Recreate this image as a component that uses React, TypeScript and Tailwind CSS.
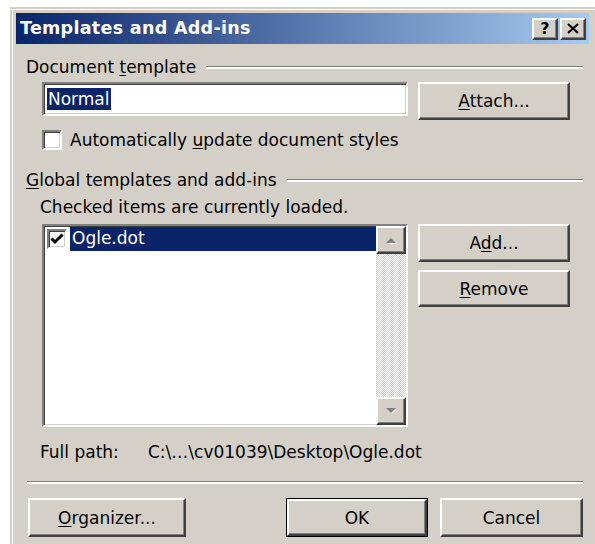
import { ReactNode } from 'react'

const font = { fontFamily: '"DejaVu Sans", Tahoma, sans-serif' }

// classic raised 3D edge used by push buttons
const raised =
  'bg-[#d4d0c8] border-2 border-t-white border-l-white border-r-[#404040] border-b-[#404040] shadow-[inset_-1px_-1px_0_#808080]'

// sunken edge used by edit fields, check boxes and list boxes
const sunken =
  'bg-white border-2 border-t-[#808080] border-l-[#808080] border-r-white border-b-white shadow-[inset_1px_1px_0_#404040,inset_-1px_-1px_0_#d4d0c8]'

function Button({ children, className = '' }: { children: ReactNode; className?: string }) {
  return (
    <div className={`${raised} flex items-center justify-center text-[17px] leading-[20px] text-black ${className}`}>
      {children}
    </div>
  )
}

function Etched({ className = '' }: { className?: string }) {
  return <div className={`h-[3px] border-t border-t-[#808080] border-b-2 border-b-white ${className}`} />
}

function Check({ checked = false }: { checked?: boolean }) {
  return (
    <div className={`${sunken} w-[20px] h-[20px] flex items-center justify-center shrink-0`}>
      {checked && (
        <svg width="14" height="12" viewBox="0 0 14 12">
          <path d="M1.5 5.5 L5 9 L12.5 1.5" stroke="#000" strokeWidth="3" fill="none" />
        </svg>
      )}
    </div>
  )
}

function ScrollArrow({ up }: { up?: boolean }) {
  return (
    <div className={`${raised} w-[30px] h-[28px] flex items-center justify-center`}>
      <svg width="14" height="8" viewBox="0 0 14 8">
        {up ? (
          <>
            <path d="M2 7 L7 2 L12 7 Z" fill="#fff" transform="translate(1,1)" />
            <path d="M2 7 L7 2 L12 7 Z" fill="#808080" />
          </>
        ) : (
          <>
            <path d="M2 1 L12 1 L7 6 Z" fill="#fff" transform="translate(1,1)" />
            <path d="M2 1 L12 1 L7 6 Z" fill="#808080" />
          </>
        )}
      </svg>
    </div>
  )
}

export default function App() {
  return (
    <div className="w-[595px] h-[544px] bg-white overflow-hidden pt-[7px] pl-[10px]" style={font}>
      <div className="w-[590px] h-[560px] bg-[#d4d0c8] border-l-2 border-t-2 border-l-[#d4d0c8] border-t-[#d4d0c8] shadow-[inset_1px_1px_0_#fff] pl-[4px] pt-[4px]">
        {/* caption bar */}
        <div className="w-[573px] h-[31px] bg-[linear-gradient(to_right,#0a246a,#a6caf0)] flex items-center pl-[4px] pr-[3px]">
          <span className="text-white font-bold text-[17.5px] leading-[22px] tracking-[0.3px] -mt-[2px]">Templates and Add-ins</span>
          <div className="ml-auto flex gap-[2px]">
            <div className={`${raised} w-[26px] h-[22px] flex items-center justify-center text-[16px] font-bold leading-none text-black`}>?</div>
            <div className={`${raised} w-[26px] h-[22px] flex items-center justify-center`}>
              <svg width="12" height="11" viewBox="0 0 12 11">
                <path d="M1 1 L11 10 M11 1 L1 10" stroke="#000" strokeWidth="2.2" />
              </svg>
            </div>
          </div>
        </div>

        <div className="pl-[10px] w-[567px] text-[17px] leading-[20px] text-black">
          {/* document template group */}
          <div className="mt-[13px] flex items-center">
            <span>
              Document <span className="underline underline-offset-2">t</span>emplate
            </span>
            <Etched className="flex-1 ml-[10px]" />
          </div>

          <div className="mt-[5px] pl-[16px] flex items-start gap-[10px]">
            <div className={`${sunken} w-[366px] h-[34px] flex items-center pl-[3px]`}>
              <span className="bg-[#0a246a] text-white px-[1px] leading-[22px]">Normal</span>
            </div>
            <Button className="w-[152px] h-[38px]">
              <span>
                <span className="underline underline-offset-2">A</span>ttach...
              </span>
            </Button>
          </div>

          <div className="mt-[10px] pl-[16px] flex items-center gap-[8px] h-[20px]">
            <Check />
            <span>
              Automatically <span className="underline underline-offset-2">u</span>pdate document styles
            </span>
          </div>

          {/* global templates group */}
          <div className="mt-[20px] flex items-center">
            <span>
              <span className="underline underline-offset-2">G</span>lobal templates and add-ins
            </span>
            <Etched className="flex-1 ml-[10px]" />
          </div>

          <div className="mt-[7px] pl-[14px]">Checked items are currently loaded.</div>

          <div className="mt-[7px] pl-[16px] flex items-start gap-[10px]">
            <div className={`${sunken} w-[366px] h-[203px] flex`}>
              <div className="flex-1 pt-[1px] pl-[3px]">
                <div className="flex items-center h-[24px]">
                  <Check checked />
                  <span className="flex-1 ml-[3px] h-[24px] bg-[#0a246a] text-white pl-[2px] leading-[22px]">Ogle.dot</span>
                </div>
              </div>
              <div className="w-[30px] flex flex-col bg-[repeating-conic-gradient(#d4d0c8_0_25%,#ffffff_0_50%)] bg-[length:2px_2px]">
                <ScrollArrow up />
                <div className="flex-1" />
                <ScrollArrow />
              </div>
            </div>
            <div className="flex flex-col gap-[8px]">
              <Button className="w-[152px] h-[38px]">
                <span>
                  A<span className="underline underline-offset-2">d</span>d...
                </span>
              </Button>
              <Button className="w-[152px] h-[37px]">
                <span>
                  <span className="underline underline-offset-2">R</span>emove
                </span>
              </Button>
            </div>
          </div>

          <div className="mt-[15px] pl-[14px] flex">
            <span className="w-[108px]">Full path:</span>
            <span>C:\…\cv01039\Desktop\Ogle.dot</span>
          </div>

          <Etched className="mt-[19px] ml-[1px]" />

          <div className="mt-[14px] pl-[2px] flex items-start">
            <Button className="w-[158px] h-[39px]">
              <span>
                <span className="underline underline-offset-2">O</span>rganizer...
              </span>
            </Button>
            <div className="ml-[100px] w-[142px] h-[39px] border border-black">
              <Button className="w-full h-full">OK</Button>
            </div>
            <Button className="ml-[12px] w-[143px] h-[39px]">Cancel</Button>
          </div>
        </div>
      </div>
    </div>
  )
}
